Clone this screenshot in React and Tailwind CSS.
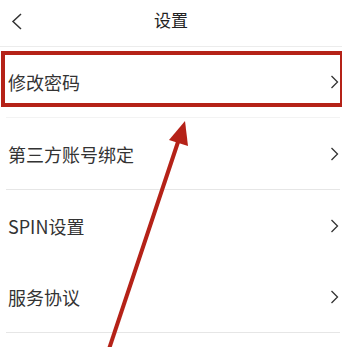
import React from "react";

const items = [
  { label: "修改密码", h: "h-[71px]", border: "border-[#f3f3f3]" },
  { label: "第三方账号绑定", h: "h-[72px]", border: "border-[#e6e6e6]" },
  { label: "SPIN设置", h: "h-[72px]", border: "border-transparent" },
  { label: "服务协议", h: "h-[71px]", border: "border-[#e6e6e6]" },
];

function Chevron() {
  return (
    <svg width="9" height="14" viewBox="0 0 9 14" fill="none" className="mr-[1px]">
      <polyline points="1.5,1 7.5,7 1.5,13" stroke="#333" strokeWidth="1.3" />
    </svg>
  );
}

export default function App() {
  return (
    <div
      className="relative w-[342px] h-[347px] overflow-hidden bg-white text-[#333]"
      style={{ fontFamily: '"Noto Sans CJK SC", "Noto Sans", sans-serif' }}
    >
      <div className="h-[47px] border-b border-[#ececec]">
        <div className="relative h-[40px] flex items-center justify-center">
          <svg width="12" height="18" viewBox="0 0 12 18" fill="none" className="absolute left-[11px] top-[13px]">
            <polyline points="10,1 2,8.5 10,16" stroke="#333" strokeWidth="1.5" />
          </svg>
          <span className="text-[17px] text-[#222]">设置</span>
        </div>
      </div>

      {items.map((it) => (
        <div key={it.label} className={`${it.h} ml-[6px] mr-[2px] border-b ${it.border} flex items-center justify-between`}>
          <span className="pl-[2px] text-[18px] leading-none">{it.label}</span>
          <Chevron />
        </div>
      ))}

      {/* annotation box */}
      <div className="absolute left-[1px] top-[51px] w-[343px] h-[56px] border-4 border-[#b52218]" />

      {/* annotation arrow */}
      <svg className="absolute left-0 top-0" width="342" height="347" viewBox="0 0 342 347">
        <line x1="108" y1="352" x2="180" y2="136" stroke="#b52218" strokeWidth="4" />
        <polygon points="185,121 169,140 188,146" fill="#b52218" />
      </svg>
    </div>
  );
}
